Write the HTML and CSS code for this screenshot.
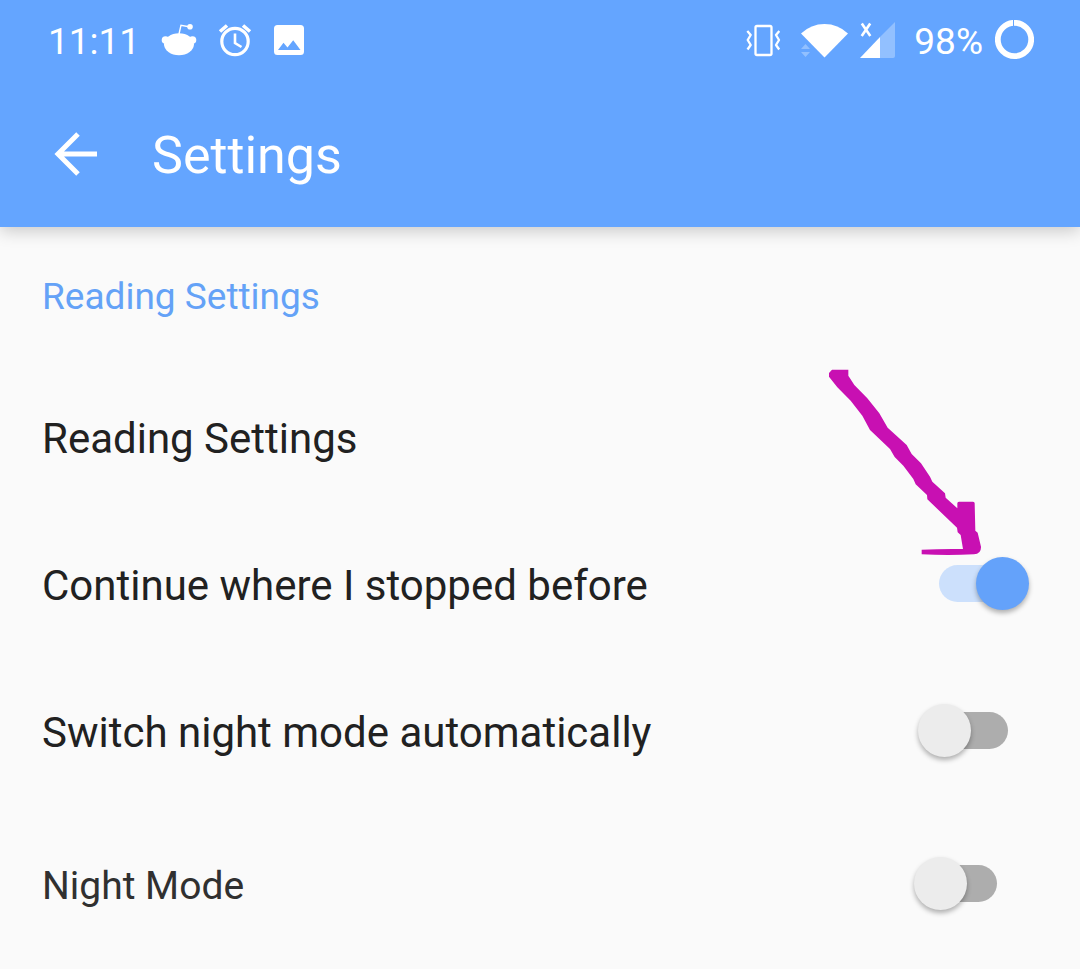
FILE: index.html
```html
<!DOCTYPE html>
<html lang="en">
<head>
<meta charset="utf-8">
<meta name="viewport" content="width=device-width, initial-scale=1">
<title>Settings</title>
<link rel="stylesheet" href="styles.css">
</head>
<body>
<header class="app-header">
  <div class="status-bar">
    <div class="status-group status-group-left">
      <span class="status-text clock">11:11</span>
      <svg class="icon" width="36" height="40" viewBox="162 20 36 40" aria-hidden="true">
        <circle cx="166.500" cy="40" r="3.800" fill="#fff"/><circle cx="193.500" cy="40" r="3.800" fill="#fff"/>
        <ellipse cx="180" cy="44.300" rx="15" ry="11" fill="#fff"/>
        <path d="M180 34l2-8.800 8 1.500" fill="none" stroke="#fff" stroke-width="1.400"/>
        <circle cx="191" cy="26.800" r="2.800" fill="#fff"/>
      </svg>
      <svg class="icon" width="34" height="40" viewBox="218 20 34 40" aria-hidden="true">
        <g fill="none" stroke="#fff">
          <circle cx="235" cy="41.500" r="13.200" stroke-width="3.200"/>
          <path d="M235 33.500v9.500l6.500 4" stroke-width="2.600"/>
          <path d="M220 31.500l7-6M250 31.500l-7-6" stroke-width="3.600"/>
        </g>
      </svg>
      <svg class="icon" width="32" height="40" viewBox="274 20 32 40" aria-hidden="true">
        <path fill="#fff" fill-rule="evenodd" d="M278.500 25h23q3.500 0 3.500 3.500v23q0 3.500-3.500 3.500h-23q-3.500 0-3.500-3.500v-23q0-3.500 3.500-3.500zM279 50h22.500l-7.300-9.700-5.700 7.200-4-4.700z"/>
      </svg>
    </div>
    <div class="status-group status-group-right">
      <svg class="icon" width="36" height="40" viewBox="745 20 36 40" aria-hidden="true">
        <g fill="none" stroke="#fff" stroke-width="2.300" stroke-linejoin="round">
          <rect x="755.500" y="26" width="16" height="29" rx="1.500"/>
          <path d="M747.300 31L750.700 35 747.700 40 750.700 45 747.500 49.500M779.300 31L776 35 779 40 776 45 779.200 49.500"/>
        </g>
      </svg>
      <svg class="icon wifi" width="48" height="40" viewBox="800 20 48 40" aria-hidden="true">
        <path d="M801 33.500Q811 24 824.500 24T848 33.500L824.500 57.500z" fill="#fff"/>
        <path d="M801 49l4.500-5 4.500 5zM801 52h9l-4.500 5z" fill="#fff" opacity=".3"/>
      </svg>
      <svg class="icon" width="36" height="40" viewBox="860 20 36 40" aria-hidden="true">
        <path d="M895 22v34q0 2-2 2h-13V37z" fill="#fff" opacity=".3"/>
        <path d="M860 58l20-21v21z" fill="#fff"/>
        <path d="M861.800 23.500l8.500 12.500M870.200 23.500l-8.500 12.500" stroke="#fff" stroke-width="2.600"/>
      </svg>
      <span class="status-text battery">98%</span>
      <svg class="icon" width="39" height="40" viewBox="994 20 39 40" aria-hidden="true">
        <circle cx="1013.500" cy="39.500" r="16.700" fill="none" stroke="#fff" stroke-width="5.800"/>
        <path d="M1012.500 19v7" stroke="#64a5ff" stroke-width="1"/>
      </svg>
    </div>
  </div>
  <div class="toolbar">
    <button class="back" type="button" aria-label="Back">
      <svg class="icon" width="44" height="44" viewBox="0 0 44 44" aria-hidden="true">
        <path d="M43 22H4M24 2L4 22l20 20" fill="none" stroke="#fff" stroke-width="5"/>
      </svg>
    </button>
    <h1 class="title">Settings</h1>
  </div>
</header>
<main class="settings">
  <h2 class="section-title">Reading Settings</h2>
  <div class="row">
    <a class="label" href="#reading">Reading Settings</a>
  </div>
  <div class="row row-continue">
    <label class="label" for="continue">Continue where I stopped before</label>
    <input class="switch" type="checkbox" role="switch" id="continue" checked>
    <svg class="pointer" width="154" height="186" viewBox="54 42 462 558" aria-hidden="true">
      <path fill="#c810b2" d="M66 44H115V62L133 90 172 130 208 175 233 218 290 270 305 297 333 325 360 365 367 380 405 415 407 428 442 460V445Q442 440 447 440H489Q494 440 494 445L496 527 503 533 513 575Q514 597 492 598Q414 602 335 598V584Q396 581 459 582L452 540 443 532 441 518 352 433 351 420 317 388 310 372 280 332 254 306 240 282 180 225 157 182 122 137 82 97 57 65V54Z"/>
    </svg>
  </div>
  <div class="row row-auto">
    <label class="label" for="auto">Switch night mode automatically</label>
    <input class="switch" type="checkbox" role="switch" id="auto">
  </div>
  <div class="row row-night">
    <label class="label" for="night">Night Mode</label>
    <input class="switch" type="checkbox" role="switch" id="night">
  </div>
</main>
</body>
</html>
```
FILE: styles.css
```css
* { box-sizing: border-box; }

body {
  margin: 0;
  min-height: 100vh;
  background: #fafafa;
  color: #212121;
  font-family: Roboto, "Noto Sans", sans-serif;
}

.app-header {
  background: #64a5ff;
  color: #fff;
  box-shadow: 0 4px 16px rgba(0, 0, 0, 0.2);
}

.status-bar {
  display: flex;
  justify-content: space-between;
  height: 80px;
  padding: 0 46px 0 48px;
}

.status-group { display: flex; align-items: center; }
.status-group-left { gap: 21px; }
.status-group-right { gap: 12px; }
.wifi { margin-left: 7px; }

.status-text {
  padding-top: 4px;
  font-size: 37px;
  line-height: 44px;
}
.battery { margin-left: 6px; }

.icon { display: block; flex: none; }

.toolbar {
  display: flex;
  align-items: center;
  gap: 54px;
  height: 147px;
  padding: 0 54px;
}

.back {
  padding: 0;
  border: 0;
  background: none;
  cursor: pointer;
}

.title {
  margin: 0;
  padding-top: 4px;
  font-size: 52px;
  font-weight: 400;
  line-height: 64px;
}

.section-title {
  margin: 0;
  padding: 48px 42px 44px;
  color: #64a2f7;
  font-size: 37px;
  font-weight: 400;
  line-height: 44px;
}

.row {
  position: relative;
  display: flex;
  align-items: center;
  justify-content: space-between;
  min-height: 147px;
  padding: 0 51px 0 42px;
}

.label {
  padding-top: 4px;
  color: inherit;
  font-size: 42px;
  line-height: 52px;
  text-decoration: none;
}

.row-auto { padding-right: 72px; }
.row-night {
  min-height: 159px;
  padding-right: 83px;
}
.row-night .label {
  color: #303030;
  font-size: 39px;
}

.switch {
  display: grid;
  flex: none;
  align-items: center;
  width: 90px;
  height: 53px;
  margin: 0;
  appearance: none;
  cursor: pointer;
}
.row-night .switch { width: 83px; }

.switch::before,
.switch::after {
  grid-area: 1 / 1;
  content: "";
}
.switch::before {
  height: 37px;
  margin-left: 10px;
  border-radius: 19px;
  background: #adadad;
}
.switch::after {
  width: 53px;
  height: 53px;
  border-radius: 50%;
  background: #ececec;
  box-shadow: 0 3px 5px rgba(0, 0, 0, 0.3);
}
.switch:checked::before {
  margin: 0 10px 0 0;
  background: #cce0fc;
}
.switch:checked::after {
  justify-self: end;
  background: #64a2fa;
}

.pointer {
  position: absolute;
  right: 98px;
  bottom: 102px;
  pointer-events: none;
}
```
